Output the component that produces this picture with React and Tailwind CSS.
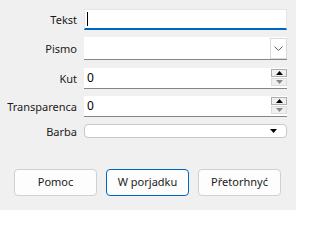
import React from "react";

const font = { fontFamily: '"Noto Sans", "Open Sans", sans-serif' };

function Label({ children }) {
  return (
    <div className="w-[77px] shrink-0 text-right text-[11px] leading-none text-[#1b1b1b] whitespace-nowrap">
      {children}
    </div>
  );
}

function Spinner() {
  return (
    <div className="flex flex-col gap-[1px] w-[16px] self-start mt-[1px]">
      <div className="h-[8px] border border-[#adadad] bg-[#f0f0f0] flex items-center justify-center">
        <svg width="7" height="4" viewBox="0 0 7 4"><path d="M0 4 L3.5 0 L7 4Z" fill="#000" /></svg>
      </div>
      <div className="h-[8px] border border-[#dcdcdc] bg-[#f0f0f0] flex items-center justify-center">
        <svg width="7" height="4" viewBox="0 0 7 4"><path d="M0 0 L7 0 L3.5 4Z" fill="#8a8a8a" /></svg>
      </div>
    </div>
  );
}

function SpinBox({ value }) {
  return (
    <div className="w-[203px] h-[21px] bg-white border-b border-[#868686] flex items-stretch">
      <div className="flex-1 flex items-center pl-[3px] text-[12px] text-black">{value}</div>
      <Spinner />
    </div>
  );
}

function Button({ children, primary }) {
  return (
    <button
      className={
        "w-[83px] h-[27px] rounded-[4px] bg-[#fdfdfd] text-[11px] text-[#1b1b1b] flex items-center justify-center " +
        (primary ? "border border-[#0067c0]" : "border border-[#d0d0d0]")
      }
      style={font}
    >
      {children}
    </button>
  );
}

export default function App() {
  return (
    <div className="w-[296px] h-[210px] bg-[#f0f0f0] overflow-hidden" style={font}>
      <div className="flex flex-col pt-[9px]">
        <div className="flex items-center gap-[7px]">
          <Label>Tekst</Label>
          <div className="w-[203px] h-[21px] bg-white border border-[#e5e5e5] border-b-2 border-b-[#0067c0] flex items-center pl-[2px]">
            <div className="w-[1px] h-[14px] bg-black" />
          </div>
        </div>
        <div className="flex items-center gap-[7px] mt-[7px]">
          <Label>Pismo</Label>
          <div className="w-[203px] h-[23px] bg-white border-b border-[#868686] flex justify-end items-start pt-[1px]">
            <div className="w-[17px] h-[21px] border border-[#d9d9d9] bg-white flex items-center justify-center">
              <svg width="9" height="6" viewBox="0 0 9 6"><path d="M0.5 0.5 L4.5 4.5 L8.5 0.5" stroke="#606060" strokeWidth="1" fill="none" /></svg>
            </div>
          </div>
        </div>
        <div className="flex items-center gap-[7px] mt-[8px]">
          <Label>Kut</Label>
          <SpinBox value="0" />
        </div>
        <div className="flex items-center gap-[7px] mt-[7px]">
          <Label>Transparenca</Label>
          <SpinBox value="0" />
        </div>
        <div className="flex items-center gap-[7px] mt-[7px]">
          <Label>Barba</Label>
          <div className="w-[203px] h-[14px] bg-white border border-[#c8c8c8] rounded-[4px] flex items-center justify-end pr-[9px]">
            <svg width="7" height="4" viewBox="0 0 7 4"><path d="M0 0 L7 0 L3.5 4Z" fill="#000" /></svg>
          </div>
        </div>
        <div className="flex gap-[9px] pl-[14px] mt-[31px]">
          <Button>Pomoc</Button>
          <Button primary>W porjadku</Button>
          <Button>Přetorhnyć</Button>
        </div>
      </div>
    </div>
  );
}
